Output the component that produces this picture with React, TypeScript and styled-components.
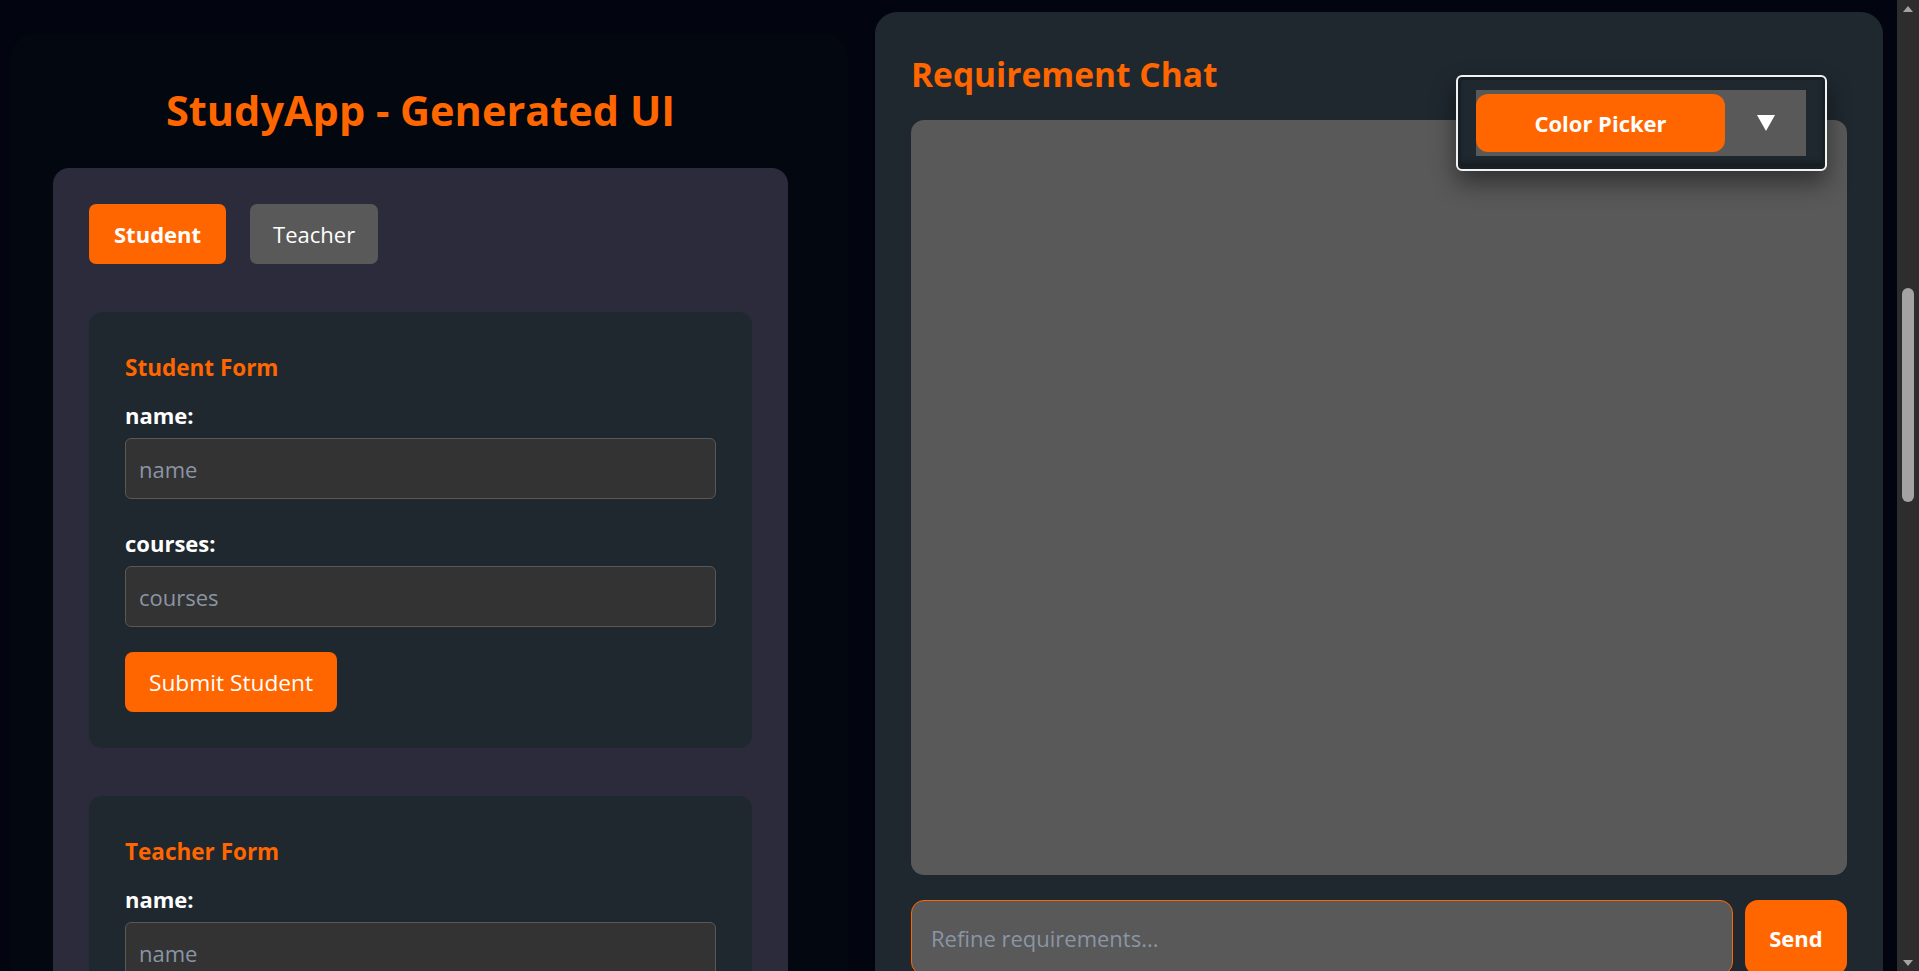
import React from "react";
import styled, { createGlobalStyle } from "styled-components";

const FONT = `"Open Sans", "Noto Sans", "DejaVu Sans", sans-serif`;
const ORANGE = "#ff6600";

const GlobalStyle = createGlobalStyle`
  html, body {
    margin: 0;
    padding: 0;
    height: 100%;
    overflow: hidden;
    background: #02050f;
  }
  body {
    font-family: ${FONT};
    color: #ffffff;
  }
  * { box-sizing: border-box; }
  input::placeholder { color: #8a95a6; opacity: 1; }
`;

const Screen = styled.div`
  display: flex;
  height: 100vh;
  width: 100vw;
  overflow: hidden;
`;

const Main = styled.main`
  flex: 1;
  display: flex;
  align-items: flex-start;
  gap: 27px;
  padding: 0 14px 0 10px;
  overflow: hidden;
  height: 100vh;
`;

const LeftColumn = styled.section`
  width: 838px;
  flex: none;
  margin-top: 33px;
  padding: 51px 60px 0 43px;
  background: #03070f;
  border-radius: 26px 26px 0 0;
  min-height: 1000px;
`;

const Title = styled.h1`
  margin: 0 0 32px;
  font-size: 41.5px;
  line-height: 52px;
  font-weight: 700;
  color: ${ORANGE};
  text-align: center;
`;

const Panel = styled.div`
  background: #2c2b3b;
  border-radius: 16px;
  padding: 36px;
  min-height: 900px;
`;

const Tabs = styled.div`
  display: flex;
  gap: 24px;
  margin-bottom: 48px;
`;

const Tab = styled.button<{ $active?: boolean }>`
  height: 60px;
  padding: 0 ${(p) => (p.$active ? 25 : 23)}px;
  border: none;
  border-radius: 7px;
  font-family: ${FONT};
  font-size: 22px;
  font-weight: ${(p) => (p.$active ? 700 : 400)};
  color: #ffffff;
  background: ${(p) => (p.$active ? ORANGE : "#595959")};
  cursor: pointer;
`;

const FormCard = styled.form`
  display: flex;
  flex-direction: column;
  align-items: flex-start;
  background: #1f282f;
  border-radius: 13px;
  padding: 36px;
  margin-bottom: 48px;
`;

const FormTitle = styled.h3`
  margin: 5px 0 13px;
  font-size: 22.5px;
  line-height: 30px;
  font-weight: 700;
  color: ${ORANGE};
`;

const Label = styled.label`
  display: block;
  margin: 4px 0 8px;
  font-size: 22px;
  line-height: 30px;
  font-weight: 700;
  color: #ffffff;
`;

const TextInput = styled.input`
  display: block;
  align-self: stretch;
  height: 61px;
  margin: 0 0 25px;
  padding: 0 13px;
  background: #333333;
  border: 1px solid #585858;
  border-radius: 6px;
  font-family: ${FONT};
  font-size: 22px;
  color: #ffffff;
  outline: none;
`;

const SubmitButton = styled.button`
  height: 60px;
  padding: 0 24px;
  border: none;
  border-radius: 8px;
  background: ${ORANGE};
  color: #ffffff;
  font-family: ${FONT};
  font-size: 22.7px;
  font-weight: 400;
  cursor: pointer;
`;

const ChatPanel = styled.section`
  position: relative;
  flex: 1;
  margin-top: 12px;
  background: #1f282f;
  border-radius: 22px;
  padding: 42px 36px 36px;
`;

const ChatTitle = styled.h2`
  margin: 0 0 26px;
  font-size: 33.5px;
  line-height: 40px;
  font-weight: 700;
  color: ${ORANGE};
`;

const ChatLog = styled.div`
  height: 755px;
  background: #595959;
  border-radius: 13px;
`;

const ChatInputRow = styled.div`
  display: flex;
  gap: 12px;
  margin-top: 25px;
`;

const ChatInput = styled.input`
  flex: 1;
  height: 75px;
  padding: 0 19px;
  background: #595959;
  border: 1px solid ${ORANGE};
  border-radius: 13px;
  font-family: ${FONT};
  font-size: 22px;
  color: #ffffff;
  outline: none;
`;

const SendButton = styled.button`
  width: 102px;
  height: 75px;
  border: none;
  border-radius: 13px;
  background: ${ORANGE};
  color: #ffffff;
  font-family: ${FONT};
  font-size: 22px;
  font-weight: 700;
  cursor: pointer;
`;

const PickerPopup = styled.div`
  position: absolute;
  top: 63px;
  right: 56px;
  width: 371px;
  height: 96px;
  padding: 13px 19px 13px 18px;
  background: #1f282f;
  border: 2px solid #f2f2f2;
  border-radius: 6px;
  box-shadow: inset 0 0 0 3px #172026, inset 0 -6px 6px rgba(0, 0, 0, 0.35),
    0 12px 24px rgba(0, 0, 0, 0.45);
`;

const PickerBar = styled.div`
  display: flex;
  align-items: center;
  height: 66px;
  padding: 4px 0;
  background: #595959;
`;

const PickerButton = styled.button`
  width: 249px;
  height: 58px;
  flex: none;
  border: none;
  border-radius: 12px;
  background: ${ORANGE};
  color: #ffffff;
  font-family: ${FONT};
  font-size: 22px;
  font-weight: 700;
  cursor: pointer;
`;

const PickerToggle = styled.div`
  flex: 1;
  display: flex;
  align-items: center;
  justify-content: center;
`;

const ScrollRail = styled.div`
  width: 22px;
  flex: none;
  height: 100vh;
  background: #2d2d2d;
  display: flex;
  flex-direction: column;
  align-items: center;
`;

const RailArrow = styled.div`
  height: 17px;
  display: flex;
  align-items: center;
  justify-content: center;
`;

const RailTrack = styled.div`
  flex: 1;
  width: 100%;
  display: flex;
  justify-content: center;
`;

const RailThumb = styled.div`
  width: 12px;
  background: #a3a3a3;
  border-radius: 6px;
`;

export default function App() {
  return (
    <>
      <GlobalStyle />
      <Screen>
        <Main>
          <LeftColumn>
            <Title>StudyApp - Generated UI</Title>
            <Panel>
              <Tabs>
                <Tab type="button" $active>
                  Student
                </Tab>
                <Tab type="button">Teacher</Tab>
              </Tabs>
              <FormCard onSubmit={(e) => e.preventDefault()}>
                <FormTitle>Student Form</FormTitle>
                <Label htmlFor="s-name">name:</Label>
                <TextInput id="s-name" placeholder="name" />
                <Label htmlFor="s-courses">courses:</Label>
                <TextInput id="s-courses" placeholder="courses" />
                <SubmitButton type="submit">Submit Student</SubmitButton>
              </FormCard>
              <FormCard onSubmit={(e) => e.preventDefault()}>
                <FormTitle>Teacher Form</FormTitle>
                <Label htmlFor="t-name">name:</Label>
                <TextInput id="t-name" placeholder="name" />
                <Label htmlFor="t-subject">subject:</Label>
                <TextInput id="t-subject" placeholder="subject" />
                <SubmitButton type="submit">Submit Teacher</SubmitButton>
              </FormCard>
            </Panel>
          </LeftColumn>
          <ChatPanel>
            <ChatTitle>Requirement Chat</ChatTitle>
            <ChatLog />
            <ChatInputRow>
              <ChatInput placeholder="Refine requirements..." />
              <SendButton type="button">Send</SendButton>
            </ChatInputRow>
            <PickerPopup>
              <PickerBar>
                <PickerButton type="button">Color Picker</PickerButton>
                <PickerToggle>
                  <svg width="18" height="16" viewBox="0 0 18 16">
                    <polygon points="0,0 18,0 9,16" fill="#ffffff" />
                  </svg>
                </PickerToggle>
              </PickerBar>
            </PickerPopup>
          </ChatPanel>
        </Main>
        <ScrollRail>
          <RailArrow>
            <svg width="10" height="6" viewBox="0 0 10 6">
              <polygon points="5,0 10,6 0,6" fill="#a3a3a3" />
            </svg>
          </RailArrow>
          <RailTrack>
            <RailThumb style={{ marginTop: 271, height: 214 }} />
          </RailTrack>
          <RailArrow>
            <svg width="10" height="6" viewBox="0 0 10 6">
              <polygon points="0,0 10,0 5,6" fill="#a3a3a3" />
            </svg>
          </RailArrow>
        </ScrollRail>
      </Screen>
    </>
  );
}
